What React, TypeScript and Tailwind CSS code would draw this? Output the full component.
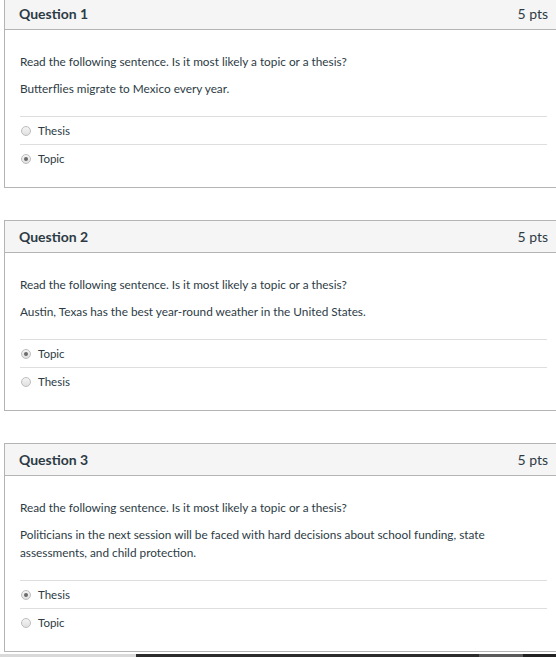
import React from 'react';

type Answer = { label: string; checked: boolean };
type Question = { id: number; title: string; points: string; prompt: string; sentence: string; answers: Answer[] };

const questions: Question[] = [
  {
    id: 1,
    title: 'Question 1',
    points: '5 pts',
    prompt: 'Read the following sentence. Is it most likely a topic or a thesis?',
    sentence: 'Butterflies migrate to Mexico every year.',
    answers: [
      { label: 'Thesis', checked: false },
      { label: 'Topic', checked: true },
    ],
  },
  {
    id: 2,
    title: 'Question 2',
    points: '5 pts',
    prompt: 'Read the following sentence. Is it most likely a topic or a thesis?',
    sentence: 'Austin, Texas has the best year-round weather in the United States.',
    answers: [
      { label: 'Topic', checked: true },
      { label: 'Thesis', checked: false },
    ],
  },
  {
    id: 3,
    title: 'Question 3',
    points: '5 pts',
    prompt: 'Read the following sentence. Is it most likely a topic or a thesis?',
    sentence:
      'Politicians in the next session will be faced with hard decisions about school funding, state assessments, and child protection.',
    answers: [
      { label: 'Thesis', checked: true },
      { label: 'Topic', checked: false },
    ],
  },
];

function Radio({ checked }: { checked: boolean }) {
  return (
    <span className="w-[10px] h-[10px] rounded-full border border-[#bdbdbd] bg-gradient-to-b from-[#f4f4f4] to-[#e0e0e0] flex items-center justify-center shrink-0">
      {checked && <span className="w-[4px] h-[4px] rounded-full bg-[#6b6b6b]" />}
    </span>
  );
}

function QuestionCard({ q }: { q: Question }) {
  return (
    <div className="w-[559px] border border-[#b4b4b4] bg-white">
      <div className="h-[32px] bg-[#f5f5f5] border-b border-[#b4b4b4] flex items-center justify-between pl-[14px] pr-[14px]">
        <span className="text-[14px] font-bold text-[#2d3b45]">{q.title}</span>
        <span className="text-[14px] text-[#2d3b45]">{q.points}</span>
      </div>
      <div className="pt-[23px] px-[15px] pb-[15px]">
        <p className="text-[11.8px] leading-[18px] text-[#2d3b45] mb-[9px]">{q.prompt}</p>
        <p className="text-[11.8px] leading-[18px] text-[#2d3b45] w-[476px] mb-[18px]">{q.sentence}</p>
        <div>
          {q.answers.map((a) => (
            <div
              key={a.label}
              className="h-[28px] border-t border-[#dedede] flex items-center gap-[7px] pl-[1px] w-[527px]"
            >
              <Radio checked={a.checked} />
              <span className="text-[11.5px] text-[#2d3b45] leading-none">{a.label}</span>
            </div>
          ))}
        </div>
      </div>
    </div>
  );
}

export default function App() {
  return (
    <div className="w-[556px] h-[657px] overflow-hidden bg-white font-['Lato','Liberation_Sans',sans-serif] flex flex-col">
      <div className="mt-[-3px] ml-[4px] flex flex-col gap-[32px]">
        {questions.map((q) => (
          <QuestionCard key={q.id} q={q} />
        ))}
      </div>
      <div className="mt-auto h-[3px] flex">
        <div className="w-[136px] bg-[#d9d9d9]" />
        <div className="w-[343px] bg-[#2b2b2b]" />
        <div className="w-[44px] bg-[#5a5a5a]" />
        <div className="flex-1 bg-[#222]" />
      </div>
    </div>
  );
}
